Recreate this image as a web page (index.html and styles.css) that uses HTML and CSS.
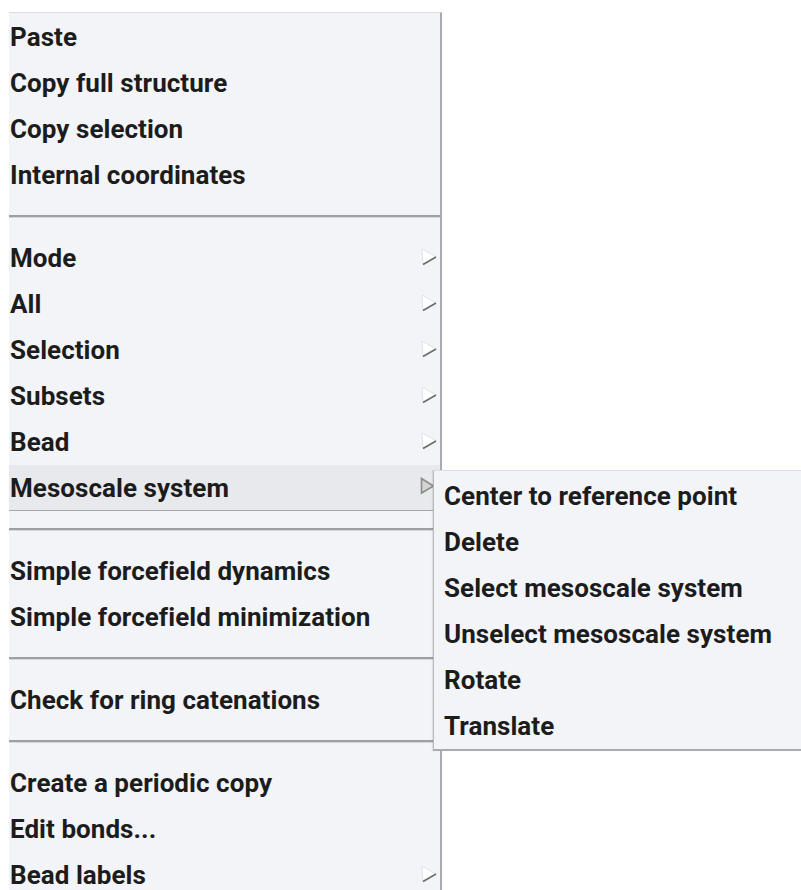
FILE: index.html
```html
<!DOCTYPE html>
<html lang="en">
<head>
  <meta charset="UTF-8" />
  <title>Context menu</title>
  <link rel="stylesheet" href="styles.css">
</head>
<body>
<div class="menu">
  <div class="item">Paste</div>
  <div class="item">Copy full structure</div>
  <div class="item">Copy selection</div>
  <div class="item">Internal coordinates</div>
  <div class="sep"></div>

  <div class="item">Mode
    <svg class="arrow" width="16" height="18" viewBox="0 0 16 18"><polygon points="1,1 15,9 2,17" fill="#ffffff" stroke="#e2e3e6" stroke-width="1"/><line x1="2" y1="16.5" x2="15" y2="9" stroke="#6f6f6f" stroke-width="1.8"/></svg>
  </div>
  <div class="item">All
    <svg class="arrow" width="16" height="18" viewBox="0 0 16 18"><polygon points="1,1 15,9 2,17" fill="#ffffff" stroke="#e2e3e6" stroke-width="1"/><line x1="2" y1="16.5" x2="15" y2="9" stroke="#6f6f6f" stroke-width="1.8"/></svg>
  </div>
  <div class="item">Selection
    <svg class="arrow" width="16" height="18" viewBox="0 0 16 18"><polygon points="1,1 15,9 2,17" fill="#ffffff" stroke="#e2e3e6" stroke-width="1"/><line x1="2" y1="16.5" x2="15" y2="9" stroke="#6f6f6f" stroke-width="1.8"/></svg>
  </div>
  <div class="item">Subsets
    <svg class="arrow" width="16" height="18" viewBox="0 0 16 18"><polygon points="1,1 15,9 2,17" fill="#ffffff" stroke="#e2e3e6" stroke-width="1"/><line x1="2" y1="16.5" x2="15" y2="9" stroke="#6f6f6f" stroke-width="1.8"/></svg>
  </div>
  <div class="item">Bead
    <svg class="arrow" width="16" height="18" viewBox="0 0 16 18"><polygon points="1,1 15,9 2,17" fill="#ffffff" stroke="#e2e3e6" stroke-width="1"/><line x1="2" y1="16.5" x2="15" y2="9" stroke="#6f6f6f" stroke-width="1.8"/></svg>
  </div>
  <div class="item active">Mesoscale system
    <svg class="arrow open" width="16" height="18" viewBox="0 0 16 18"><polygon points="1.5,1.5 13.5,9 1.5,16" fill="#d4d4d4" stroke="#8c8c8c" stroke-width="1.6"/></svg>

    <!-- submenu opened from the hovered item -->
    <div class="submenu">
      <div class="item">Center to reference point</div>
      <div class="item">Delete</div>
      <div class="item">Select mesoscale system</div>
      <div class="item">Unselect mesoscale system</div>
      <div class="item">Rotate</div>
      <div class="item">Translate</div>
    </div>
  </div>
  <div class="sep"></div>

  <div class="item">Simple forcefield dynamics</div>
  <div class="item">Simple forcefield minimization</div>
  <div class="sep"></div>

  <div class="item">Check for ring catenations</div>
  <div class="sep"></div>

  <div class="item">Create a periodic copy</div>
  <div class="item">Edit bonds...</div>
  <div class="item">Bead labels
    <svg class="arrow" width="16" height="18" viewBox="0 0 16 18"><polygon points="1,1 15,9 2,17" fill="#ffffff" stroke="#e2e3e6" stroke-width="1"/><line x1="2" y1="16.5" x2="15" y2="9" stroke="#6f6f6f" stroke-width="1.8"/></svg>
  </div>
</div>
</body>
</html>
```

FILE: styles.css
```css
/* Reset margin & padding */
* {
  margin: 0;
  padding: 0;
  box-sizing: border-box;
}

body {
  font-family: Roboto, 'Liberation Sans', sans-serif;
  background: #ffffff;
  color: #1c1c1c;
  overflow: hidden;
  height: 890px;
}

.menu {
  margin: 12px 0 0 9px;
  width: 433px;
  height: 900px;
  background: #f2f4f8;
  border-top: 1px solid #dcdee2;
  border-right: 2px solid #a9abae;
  padding-top: 1px;
}

.item {
  position: relative;
  height: 46px;
  display: flex;
  align-items: center;
  padding-left: 1px;
  font-size: 26px;
  font-weight: 700;
  letter-spacing: 0.05px;
  white-space: nowrap;
}

.item .arrow {
  position: absolute;
  left: 412px;
  top: 13px;
}

.item .arrow.open {
  left: 411px;
  top: 12px;
}

.item.active {
  background: #e8e9ec;
  border-bottom: 1px solid #a4a6a9;
}

.sep {
  height: 37px;
  display: flex;
  align-items: center;
}

.sep::before {
  content: "";
  display: block;
  width: 100%;
  height: 2px;
  background: #9d9fa2;
  border-bottom: 1px solid #d6d8dc;
}

.submenu {
  position: absolute;
  left: 424px;
  top: 5px;
  width: 368px;
  background: #f2f4f8;
  border-top: 1px solid #dcdee2;
  border-left: 1px solid #b8babd;
  border-bottom: 2px solid #a9abae;
  padding: 2px 0 0 10px;
  box-shadow: -1px 0 1px rgba(0,0,0,0.08);
}

.submenu .item {
  padding-left: 0;
}
```
